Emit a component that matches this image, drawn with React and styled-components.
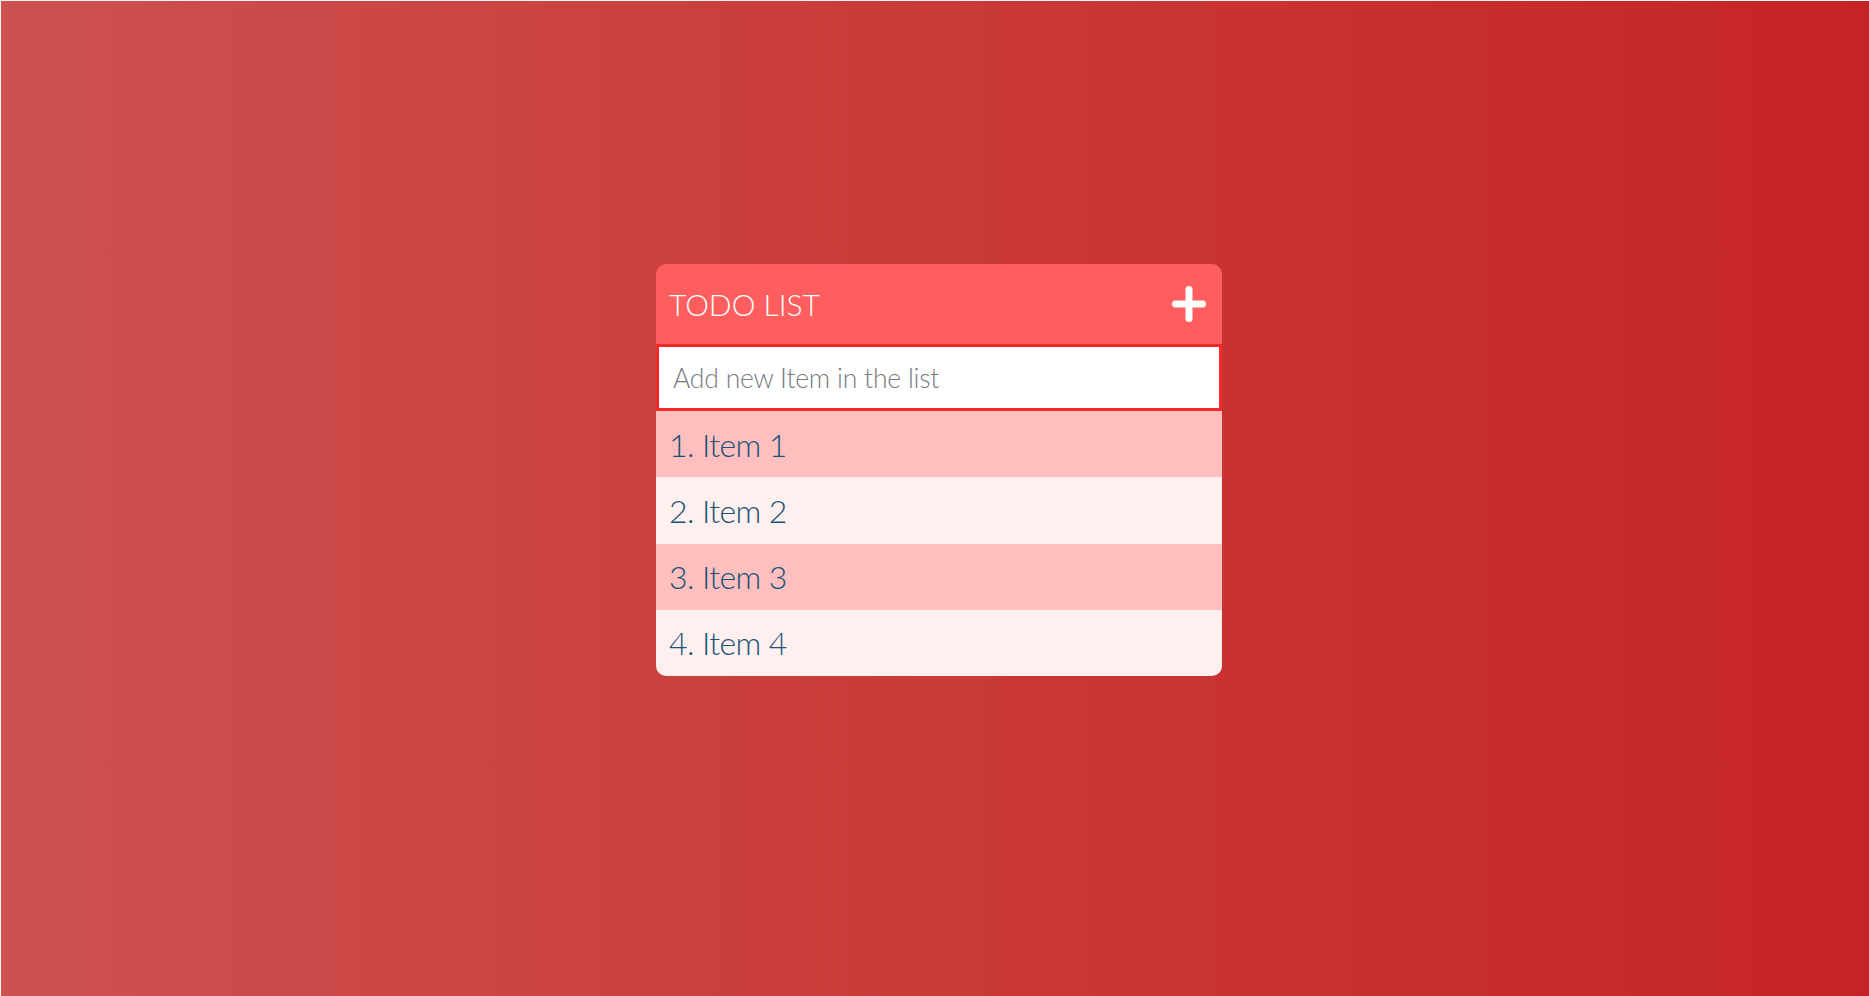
import React from "react";
import styled, { createGlobalStyle } from "styled-components";

const GlobalStyle = createGlobalStyle`
  html, body { margin: 0; padding: 0; height: 100%; }
  body {
    background: #f4f4f4;
    padding: 1px 0 0 1px;
    box-sizing: border-box;
    font-family: Lato, "Open Sans", sans-serif;
  }
  #root { height: 100%; }
`;

const Page = styled.div`
  height: 100%;
  box-sizing: border-box;
  background: linear-gradient(to right, #cc5150 0%, #c93a38 50%, #c62424 100%);
  display: flex;
  justify-content: center;
  align-items: flex-start;
  padding: 263px 0 0 8px;
`;

const Card = styled.div`
  width: 566px;
  border-radius: 10px;
  overflow: hidden;
  display: flex;
  flex-direction: column;
`;

const Header = styled.div`
  height: 80px;
  background: #ff5e5e;
  display: flex;
  align-items: center;
  justify-content: space-between;
  padding: 0 16px 0 13px;
`;

const Title = styled.h1`
  margin: 0;
  font-family: Lato, sans-serif;
  font-weight: 300;
  font-size: 30px;
  color: #ffffff;
  letter-spacing: 0;
`;

const AddButton = styled.button`
  background: none;
  border: none;
  padding: 0;
  width: 34px;
  height: 36px;
  display: flex;
  cursor: pointer;
`;

const Input = styled.input`
  box-sizing: border-box;
  width: 100%;
  height: 67px;
  border: 3px solid #ff2828;
  background: #ffffff;
  padding: 0 0 0 14px;
  font-family: Lato, sans-serif;
  font-weight: 300;
  font-size: 26.5px;
  color: #1a5276;
  caret-color: #1a5276;
  outline: none;
  &::placeholder {
    color: #767c82;
    letter-spacing: -0.2px;
  }
`;

const List = styled.ul`
  margin: 0;
  padding: 0;
  list-style: none;
`;

const Item = styled.li`
  height: 66.25px;
  box-sizing: border-box;
  display: flex;
  align-items: center;
  padding-left: 13px;
  background: ${(p) => (p.$odd ? "#ffbfbf" : "#fff0f0")};
  font-family: Lato, sans-serif;
  font-weight: 300;
  font-size: 32px;
  color: #1a5276;
  letter-spacing: -0.6px;
`;

const PlusIcon = () => (
  <svg width="34" height="36" viewBox="0 0 34 36">
    <path
      d="M17 3.5 V32.5 M3.5 18 H30.5"
      stroke="#ffffff"
      strokeWidth="7"
      strokeLinecap="round"
      fill="none"
    />
  </svg>
);

export default function App() {
  const items = ["Item 1", "Item 2", "Item 3", "Item 4"];
  return (
    <>
      <GlobalStyle />
      <Page>
        <Card>
          <Header>
            <Title>TODO LIST</Title>
            <AddButton aria-label="Add item">
              <PlusIcon />
            </AddButton>
          </Header>
          <Input autoFocus placeholder="Add new Item in the list" />
          <List>
            {items.map((it, i) => (
              <Item key={it} $odd={i % 2 === 0}>
                {i + 1}. {it}
              </Item>
            ))}
          </List>
        </Card>
      </Page>
    </>
  );
}
